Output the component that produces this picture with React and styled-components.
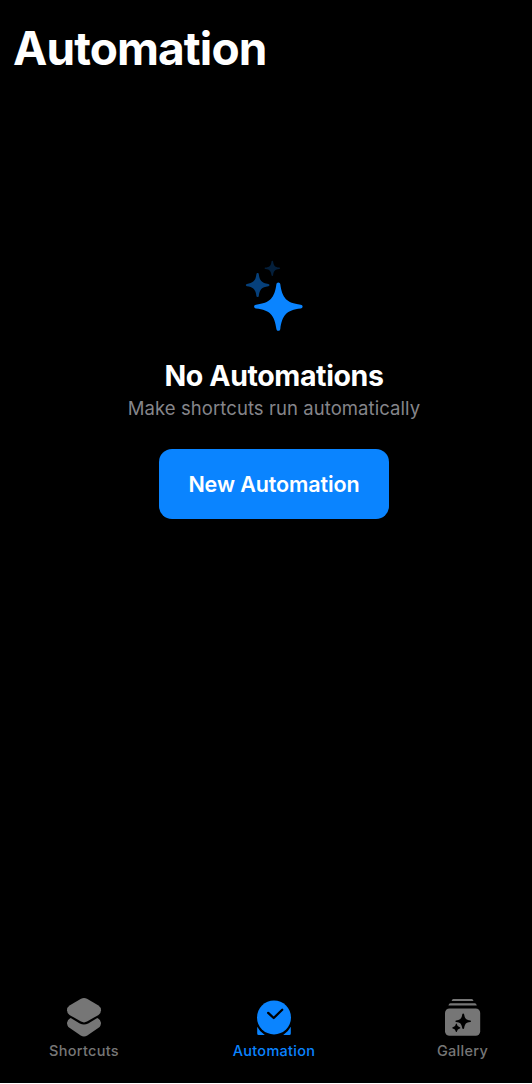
import React from 'react';
import styled, { createGlobalStyle } from 'styled-components';

const Global = createGlobalStyle`
  * { box-sizing: border-box; }
  body { margin: 0; background: #000; }
`;

const Screen = styled.div`
  display: flex;
  flex-direction: column;
  width: 532px;
  height: 1084px;
  overflow: hidden;
  background: #000;
  color: #fff;
  font-family: Inter, "Liberation Sans", sans-serif;
  border-bottom: 1px solid #fff;
`;

const Title = styled.h1`
  margin: 0;
  padding: 20px 0 0 13px;
  height: 260px;
  font-size: 46px;
  line-height: 56px;
  font-weight: 700;
  letter-spacing: -0.9px;
`;

const EmptyState = styled.main`
  display: flex;
  flex-direction: column;
  align-items: center;
  flex: 1;
  padding-left: 16px;
`;

const Heading = styled.h2`
  margin: 26px 0 0;
  font-size: 28.5px;
  line-height: 36px;
  font-weight: 700;
  letter-spacing: -0.4px;
  white-space: nowrap;
`;

const Hint = styled.p`
  margin: 2px 0 0;
  font-size: 18.5px;
  line-height: 24px;
  letter-spacing: 0.07px;
  color: #85858a;
  white-space: nowrap;
`;

const PrimaryButton = styled.button`
  width: 230px;
  height: 70px;
  margin-top: 29px;
  padding: 0;
  border: 0;
  border-radius: 13px;
  background: #0a84ff;
  color: #fff;
  font: 600 21.5px/28px Inter, "Liberation Sans", sans-serif;
  letter-spacing: -0.1px;
  white-space: nowrap;
`;

const TabBar = styled.nav`
  display: grid;
  grid-template-columns: 168px 212px 165px;
  height: 89px;
`;

const Tab = styled.a`
  display: flex;
  flex-direction: column;
  align-items: center;
  color: ${(p) => (p.$active ? '#0a84ff' : '#767676')};
  font-size: 14.5px;
  line-height: 20px;
  font-weight: 500;
  letter-spacing: 0.3px;

  svg { display: block; margin-bottom: 3px; }
`;

const SparklesIcon = () => (
  <svg width="58" height="72" viewBox="245 260 58 72">
    <path fill="#0a84ff" d="M278.300 282.400C279.400 282.400 280.100 283.100 280.300 284.300C282.200 297.800 286.300 303 300.700 304.700C301.900 304.900 302.600 305.500 302.600 306.600C302.600 307.600 301.900 308.300 300.700 308.500C286.300 310.100 282.200 315.400 280.300 328.900C280.100 330.100 279.400 330.800 278.300 330.800C277.300 330.800 276.600 330.100 276.400 328.900C274.500 315.400 270.400 310.100 256 308.500C254.800 308.300 254.100 307.600 254.100 306.600C254.100 305.500 254.800 304.900 256 304.700C270.400 303 274.500 297.800 276.400 284.300C276.600 283.100 277.300 282.400 278.300 282.400Z" />
    <path fill="#06407b" d="M257.600 273.100C258.300 273.100 258.700 273.600 258.800 274.200C259.600 280.400 261.500 282.900 268.400 283.900C269.100 284 269.500 284.400 269.500 285.100C269.500 285.700 269.100 286.100 268.400 286.200C261.500 287.100 259.600 289.700 258.800 295.900C258.700 296.500 258.300 297 257.600 297C257 297 256.500 296.500 256.400 295.900C255.600 289.700 253.700 287.100 246.900 286.200C246.200 286.100 245.800 285.700 245.800 285.100C245.800 284.400 246.200 284 246.900 283.900C253.700 282.900 255.600 280.400 256.400 274.200C256.500 273.600 257 273.100 257.600 273.100Z" />
    <path fill="#041f3b" d="M272.300 260.700C272.800 260.700 273 261 273.100 261.400C273.700 265.600 274.900 267.100 279.300 267.600C279.700 267.700 280 267.900 280 268.300C280 268.800 279.700 269 279.300 269.100C274.900 269.600 273.700 271.200 273.100 275.300C273 275.700 272.800 276 272.300 276C271.900 276 271.600 275.700 271.500 275.300C270.900 271.200 269.700 269.600 265.300 269.100C264.900 269 264.600 268.800 264.600 268.300C264.600 267.900 264.900 267.700 265.300 267.600C269.700 267.100 270.900 265.600 271.500 261.400C271.600 261 271.900 260.700 272.300 260.700Z" />
  </svg>
);

const ShortcutsIcon = () => (
  <svg width="36" height="44" viewBox="66 994 36 44" fill="currentColor">
    <path d="M81 998.800Q84 997.200 87 998.800L98.500 1005.500Q101 1007.200 101 1010.200Q101 1013.200 98.500 1014.900L87 1021.600Q84 1023.200 81 1021.600L69.500 1014.900Q67 1013.200 67 1010.200Q67 1007.200 69.500 1005.500Z" />
    <path d="M70.700 1018.100L79.800 1023.500Q84 1025.700 88.200 1023.500L97.300 1018.100Q99 1019 100 1020.300Q101.700 1022.800 100.500 1025.500Q99.900 1027 98.200 1028L87.300 1035.400Q84 1037.500 80.700 1035.400L69.800 1028Q68.100 1027 67.500 1025.500Q66.300 1022.800 68 1020.300Q69 1019 70.700 1018.100Z" />
  </svg>
);

const ClockIcon = () => (
  <svg width="36" height="44" viewBox="256 994 36 44">
    <circle cx="274" cy="1017.400" r="17" fill="currentColor" />
    <path d="M268.200 1012.900L273.700 1018L282.200 1009.700" fill="none" stroke="#000" strokeWidth="2.300" strokeLinecap="round" strokeLinejoin="round" />
    <path fill="currentColor" d="M257.200 1026.700Q259.700 1031.600 264.800 1035H258.700Q257.200 1035 257.200 1033.500ZM290.800 1026.700Q288.300 1031.600 283.200 1035H289.300Q290.800 1035 290.800 1033.500Z" />
  </svg>
);

const GalleryIcon = () => (
  <svg width="36" height="44" viewBox="445 994 36 44">
    <path fill="currentColor" d="M453.300 999H471.700Q473 999 473.500 1001H451.600Q452.100 999 453.300 999ZM450.500 1003.300H474.700Q476.300 1003.300 476.800 1005.500H448.400Q448.900 1003.300 450.500 1003.300Z" />
    <rect x="445" y="1008.500" width="35.200" height="27.300" rx="4.500" fill="currentColor" />
    <path d="M463.200 1013.400C463.700 1013.400 464 1013.700 464.100 1014.200C464.900 1018.700 466 1019.900 470.300 1020.400C470.800 1020.500 471 1020.800 471 1021.200C471 1021.700 470.800 1022 470.300 1022.100C466 1022.700 464.900 1023.700 464.100 1028.300C464 1028.800 463.700 1029.100 463.200 1029.100C462.700 1029.100 462.400 1028.800 462.300 1028.300C461.500 1023.700 460.400 1022.700 456.100 1022.100C455.600 1022 455.400 1021.700 455.400 1021.200C455.400 1020.800 455.600 1020.500 456.100 1020.400C460.400 1019.900 461.500 1018.700 462.300 1014.200C462.400 1013.700 462.700 1013.400 463.200 1013.400Z" />
    <path d="M456.300 1023.600Q456.800 1023.600 456.900 1024.200Q457.300 1027 459.800 1027.300Q460.400 1027.400 460.400 1027.900Q460.400 1028.300 459.800 1028.400Q457.300 1028.700 456.900 1031.400Q456.800 1032 456.300 1032Q455.900 1032 455.800 1031.400Q455.400 1028.700 452.900 1028.400Q452.200 1028.300 452.200 1027.900Q452.200 1027.400 452.900 1027.300Q455.400 1027 455.800 1024.200Q455.900 1023.600 456.300 1023.600Z" />
  </svg>
);

export default function App() {
  return (
    <Screen>
      <Global />
      <Title>Automation</Title>
      <EmptyState>
        <SparklesIcon />
        <Heading>No Automations</Heading>
        <Hint>Make shortcuts run automatically</Hint>
        <PrimaryButton>New Automation</PrimaryButton>
      </EmptyState>
      <TabBar>
        <Tab><ShortcutsIcon />Shortcuts</Tab>
        <Tab $active><ClockIcon />Automation</Tab>
        <Tab><GalleryIcon />Gallery</Tab>
      </TabBar>
    </Screen>
  );
}
